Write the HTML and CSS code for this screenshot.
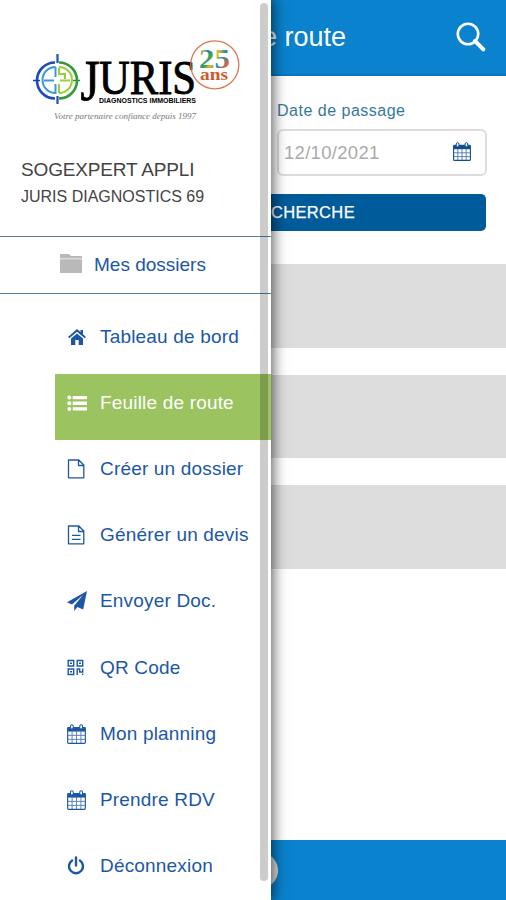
FILE: index.html
```html
<!DOCTYPE html>
<html lang="fr">
<head>
<meta charset="utf-8">
<title>Feuille de route</title>
<link rel="stylesheet" href="styles.css">
</head>
<body>
<svg class="defs" aria-hidden="true">
  <symbol id="calendar" viewBox="0 0 18 19">
    <rect x=".6" y="3.3" width="16.8" height="15.1" rx="1" fill="#fff" stroke="currentColor" stroke-width="1.1"/>
    <path d="M.5 3h17v4.2H.5z" fill="currentColor"/>
    <path d="M1 10.8h16M1 14.6h16M4.8 7v11.4M9 7v11.4M13.2 7v11.4" stroke="currentColor" stroke-width=".9" opacity=".75"/>
    <rect x="3.3" y=".7" width="2.6" height="4" rx="1.2" fill="#fff" stroke="currentColor"/>
    <rect x="12.1" y=".7" width="2.6" height="4" rx="1.2" fill="#fff" stroke="currentColor"/>
  </symbol>
</svg>
<div class="screen">
  <header class="topbar">
    <h1 class="title">Feuille de route</h1>
    <svg class="search" viewBox="0 0 30 30"><circle cx="12" cy="12" r="10.2" fill="none" stroke="#fff" stroke-width="2.6"/><path d="M19 19l8.3 8.3" stroke="#fff" stroke-width="4" stroke-linecap="round"/></svg>
  </header>
  <main class="content">
    <div class="form">
      <label class="label">Date de passage</label>
      <div class="field"><span>12/10/2021</span><svg class="field-icon"><use href="#calendar"/></svg></div>
    </div>
    <div class="button">RECHERCHE</div>
    <div class="cards"><div class="card"></div><div class="card"></div><div class="card"></div></div>
  </main>
  <footer class="bottombar"><span class="round"></span></footer>

  <aside class="drawer">
    <svg class="logo" viewBox="0 0 271 90">
      <defs>
        <linearGradient id="ring" gradientUnits="userSpaceOnUse" x1="36" y1="0" x2="78" y2="0"><stop offset="0" stop-color="#173fbd"/><stop offset=".43" stop-color="#2361aa"/><stop offset=".6" stop-color="#389b48"/><stop offset="1" stop-color="#269334"/></linearGradient>
        <linearGradient id="number" x1="0" y1="0" x2="1" y2=".6"><stop offset="0" stop-color="#eb6b20"/><stop offset=".16" stop-color="#f0b51d"/><stop offset=".32" stop-color="#1885bd"/><stop offset=".47" stop-color="#35a64b"/><stop offset=".6" stop-color="#f2ba18"/><stop offset=".76" stop-color="#168ac0"/><stop offset="1" stop-color="#df6b2c"/></linearGradient>
      </defs>
      <g fill="none">
        <path d="M55 24.5A18 18 0 0 0 55 60.5" stroke="#1d49ba" stroke-width="2.6"/>
        <path d="M59 24.5A18 18 0 0 1 59 60.5" stroke="#329a3d" stroke-width="2.6"/>
        <path d="M55.5 29A13 13 0 0 0 55.5 55V46M55.5 29V39M44 42.5H54" stroke="#399bd5" stroke-width="2"/>
        <path d="M59 29A13 13 0 0 1 59 55M59 46V55M60 42.5H70M59 30V36H65V41" stroke="#9bcf36" stroke-width="2"/>
        <path d="M33 42.5H40M73 42.5H80" stroke="url(#ring)" stroke-width="1.6"/>
        <path d="M57.5 16V25M57.5 58V66" stroke="#1e54aa" stroke-width="2.2"/>
      </g>
      <text class="logo-name"><tspan x="80.5" y="61.5" class="logo-initial" textLength="19" lengthAdjust="spacingAndGlyphs">J</tspan><tspan x="99" y="56" textLength="97" lengthAdjust="spacingAndGlyphs">URIS</tspan></text>
      <text x="99" y="65.2" class="logo-sub" textLength="97" lengthAdjust="spacingAndGlyphs">DIAGNOSTICS IMMOBILIERS</text>
      <text x="54" y="81" class="logo-tag" textLength="142" lengthAdjust="spacingAndGlyphs">Votre partenaire confiance depuis 1997</text>
      <circle cx="214.8" cy="26.8" r="24" fill="none" stroke="#db7950" stroke-width="1.3"/>
      <text x="199" y="29.5" class="logo-years" fill="url(#number)" textLength="31" lengthAdjust="spacingAndGlyphs">25</text>
      <text x="200" y="42" class="logo-ans" textLength="28" lengthAdjust="spacingAndGlyphs">ans</text>
    </svg>
    <div class="user"><div class="user-name">SOGEXPERT APPLI</div><div class="user-company">JURIS DIAGNOSTICS 69</div></div>
    <div class="folders"><svg class="folder" viewBox="0 0 22 19"><path d="M0 0h9l2 2h11v2.5H0zM0 5.3h22V19H0z" fill="#b9b9b9"/></svg><span>Mes dossiers</span></div>
    <nav class="menu">
      <a class="item"><svg class="icon" viewBox="0 0 20 20"><path d="M10 2L1 10l1.3 1.3L10 4.8l7.7 6.5L19 10l-3-2.7V3h-2.5v2.1zM10 6.4l-6 5V18h4.3v-5h3.4v5H16v-6.6z" fill="currentColor"/></svg><span>Tableau de bord</span></a>
      <a class="item active"><svg class="icon" viewBox="0 0 20 20"><g fill="currentColor"><circle cx="2.3" cy="4.5" r="2"/><circle cx="2.3" cy="10.2" r="2"/><circle cx="2.3" cy="16" r="2"/><path d="M5.7 3H20v3.3H5.7zM5.7 8.6H20v3.3H5.7zM5.7 14.3H20v3.3H5.7z"/></g></svg><span>Feuille de route</span></a>
      <a class="item"><svg class="icon" viewBox="0 0 20 20"><path d="M1.5 1h10.3l5 5v12.8H1.5zM11.5 1v5.5h5.3" fill="none" stroke="currentColor" stroke-width="1.3" stroke-linejoin="round"/></svg><span>Créer un dossier</span></a>
      <a class="item"><svg class="icon" viewBox="0 0 20 20"><path d="M1.5 1h10.3l5 5v12.8H1.5zM11.5 1v5.5h5.3M5 10.3h8.5M5 14.3h8.5" fill="none" stroke="currentColor" stroke-width="1.3" stroke-linejoin="round"/></svg><span>Générer un devis</span></a>
      <a class="item"><svg class="icon" viewBox="0 0 20 20"><path d="M20 0L0 11.3l5 2.3L16 4 7.2 14.7V20l3.2-4 5.8 2.4z" fill="currentColor"/></svg><span>Envoyer Doc.</span></a>
      <a class="item"><svg class="icon" viewBox="0 0 20 20"><path d="M1.2 2.5h5.5V8H1.2zM10.2 2.5h5.5V8h-5.5zM1.2 11h5.5v5.5H1.2zM10.2 17v-6h2.5v3h3v-3.5M15.7 15.5V17M3 5.2h2M12 5.2h2M3 13.7h2" fill="none" stroke="currentColor" stroke-width="1.4"/></svg><span>QR Code</span></a>
      <a class="item"><svg class="icon cal"><use href="#calendar"/></svg><span>Mon planning</span></a>
      <a class="item"><svg class="icon cal"><use href="#calendar"/></svg><span>Prendre RDV</span></a>
      <a class="item"><svg class="icon" viewBox="0 0 20 20"><path d="M5.1 4.4a7 7 0 1 0 7.8 0M9 1.5v8" fill="none" stroke="currentColor" stroke-width="2.4" stroke-linecap="round"/></svg><span>Déconnexion</span></a>
    </nav>
    <div class="scrollbar"></div>
  </aside>
</div>
</body>
</html>
```
FILE: styles.css
```css
* { box-sizing: border-box; }
body { margin: 0; font-family: "Liberation Sans", Arial, sans-serif; }
.defs { display: none; }
.screen { position: relative; width: 506px; height: 900px; overflow: hidden; background: #fff; display: flex; flex-direction: column; }
.topbar { height: 76px; flex: none; background: #0a82cd; border-bottom: 2px solid #0876c1; color: #fff; display: flex; align-items: center; }
.title { width: 346px; margin: 0; text-align: right; font-size: 27px; font-weight: 400; line-height: 76px; }
.search { width: 30px; height: 30px; margin: 0 0 1px 110px; }
.content { flex: 1; }
.form { margin-left: 277px; width: 210px; padding-top: 25px; }
.label { display: block; height: 28px; line-height: 20px; font-size: 16px; letter-spacing: .5px; color: #34789d; white-space: nowrap; }
.field { height: 47px; border: 2px solid #ddd; border-radius: 6px; display: flex; align-items: center; justify-content: space-between; padding: 0 14px 0 5px; font-size: 18.5px; letter-spacing: .3px; color: #aaa; }
.field-icon { width: 18px; height: 19px; color: #124c94; margin-bottom: 3px; }
.button { margin: 18px 20px 0 19px; height: 37px; border-radius: 5px; background: #005b9b; color: #fff; font-size: 16.5px; letter-spacing: .35px; line-height: 37px; text-align: right; padding-right: 131px; -webkit-text-stroke: .25px #fff; }
.cards { margin-top: 33px; display: grid; gap: 27px; }
.card { height: 83.5px; background: #ddd; }
.bottombar { height: 60px; flex: none; background: #0a82cd; padding: 12px 0 0 241px; }
.round { display: block; width: 37px; height: 37px; border-radius: 50%; background: #ddd; }
.drawer { position: absolute; left: 0; top: 0; width: 271px; height: 900px; background: #fff; box-shadow: 0 0 13px 2px rgba(0,0,0,.65); color: #1c57a5; }
.logo { display: block; width: 271px; height: 90px; margin-top: 38px; }
.logo-name { font: 49px "Liberation Serif", serif; stroke: #000; stroke-width: .9px; }
.logo-initial { font-size: 57px; }
.logo-sub { font: bold 7.5px "Liberation Sans", sans-serif; }
.logo-tag { font: italic 9px "Liberation Serif", serif; fill: #777; }
.logo-years { font: bold 28px "Liberation Serif", serif; }
.logo-ans { font: bold 17px "Liberation Serif", serif; fill: #cf592d; }
.user { height: 108px; padding: 30px 0 0 21px; color: #444; white-space: nowrap; }
.user-name { font-size: 19px; line-height: 24px; letter-spacing: -.15px; }
.user-company { font-size: 16px; line-height: 20px; margin-top: 5px; }
.folders { height: 58px; border: solid #547da6; border-width: 1.5px 0; display: flex; align-items: center; padding-left: 60px; font-size: 19px; }
.folder { width: 22px; height: 19px; margin-right: 12px; margin-bottom: 3px; }
.menu { margin: 13.5px 0 0 55px; }
.item { height: 66.1px; padding: 0 0 7px 12px; display: flex; align-items: center; font-size: 19px; letter-spacing: .18px; white-space: nowrap; }
.active { background: #9bc35f; color: #fff; }
.icon { width: 20px; height: 20px; margin-right: 13px; }
.cal { width: 19px; margin-right: 14px; }
.scrollbar { position: absolute; left: 260px; top: 3px; width: 8px; height: 878px; border-radius: 4px; background: rgba(0,0,0,.2); }
```
